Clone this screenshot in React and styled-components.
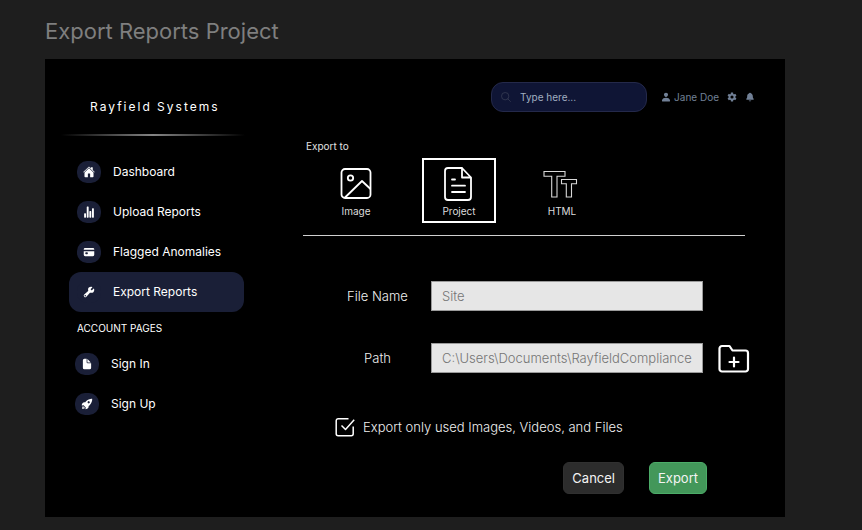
import React, { useState } from "react";
import styled, { createGlobalStyle } from "styled-components";
import {
  IoHome,
  IoStatsChart,
  IoCard,
  IoBuild,
  IoDocument,
  IoRocketSharp,
  IoPerson,
  IoSettingsSharp,
  IoNotifications,
  IoSearchOutline,
} from "react-icons/io5";

const GlobalStyle = createGlobalStyle`
  *, *::before, *::after { box-sizing: border-box; }
  body {
    margin: 0;
    background: #1e1e1e;
    color: #fff;
    font-family: Inter, "Open Sans", sans-serif;
    font-size: 12px;
    line-height: 16px;
  }
  button, input { font: inherit; color: inherit; }
`;

const Page = styled.main`
  padding: 17px 77px 13px 45px;
`;

const PageTitle = styled.h1`
  margin: 0 0 14px;
  color: #7f7f7f;
  font-size: 22px;
  font-weight: 400;
  line-height: 28px;
`;

const Panel = styled.div`
  display: flex;
  background: #000;
`;

const Sidebar = styled.aside`
  flex: 0 0 200px;
  padding: 40px 0 92px;
`;

const Brand = styled.div`
  padding-left: 45px;
  letter-spacing: 2px;
  font-size: 12px;
`;

const BrandRule = styled.div`
  height: 2px;
  margin: 19px 0 16px 16px;
  background: linear-gradient(90deg, transparent, #858585 50%, transparent);
`;

const NavList = styled.ul`
  list-style: none;
  margin: 0 0 0 24px;
  padding: 0;
`;

const NavLink = styled.a`
  display: flex;
  align-items: center;
  gap: 12px;
  height: 40px;
  width: 175px;
  padding-left: ${(p) => (p.$compact ? 6 : 8)}px;
  border-radius: 12px;
  background: ${(p) => (p.$active ? "#1a1f37" : "transparent")};
  color: #fff;
  text-decoration: none;
`;

const NavIcon = styled.span`
  display: grid;
  place-items: center;
  width: 24px;
  height: 22px;
  border-radius: 10px;
  background: #1a1f37;
  font-size: 12px;
`;

const SectionLabel = styled.h2`
  margin: 8px 0 8px 32px;
  font-size: 10px;
  font-weight: 400;
  line-height: 16px;
`;

const Content = styled.section`
  flex: 1;
  min-width: 0;
  padding: 23px 30px 23px 58px;
`;

const TopBar = styled.header`
  display: flex;
  justify-content: flex-end;
  align-items: center;
  gap: 14px;
  font-size: 10px;
`;

const SearchBox = styled.label`
  display: flex;
  align-items: center;
  gap: 8px;
  width: 156px;
  height: 30px;
  padding: 0 8px;
  border: 1px solid #24294a;
  border-radius: 12px;
  background: #0f1535;
  color: #3a3f55;
  font-size: 12px;
`;

const SearchInput = styled.input`
  flex: 1;
  min-width: 0;
  padding: 0;
  border: 0;
  outline: 0;
  background: transparent;
  font-size: 10px;
  color: #a0aec0;
  &::placeholder { color: #a0aec0; opacity: 1; }
`;

const UserTools = styled.div`
  display: flex;
  align-items: center;
  gap: 8px;
  color: #718096;
`;

const UserLink = styled.a`
  display: flex;
  align-items: center;
  gap: 3px;
  color: #718096;
  text-decoration: none;
`;

const IconButton = styled.button`
  display: flex;
  padding: 0;
  border: 0;
  background: none;
  cursor: pointer;
`;

const ExportTo = styled.h2`
  margin: 26px 0 4px 3px;
  font-size: 10px;
  font-weight: 400;
  line-height: 16px;
  color: #e0e0e0;
`;

const FormatBar = styled.div`
  display: flex;
  gap: 29px;
  margin-right: 10px;
  padding: 0 16px 12px;
  border-bottom: 1px solid #d0d0d0;
`;

const FormatButton = styled.button`
  display: flex;
  flex-direction: column;
  align-items: center;
  justify-content: flex-end;
  gap: 3px;
  width: 74px;
  height: 65px;
  padding: 0 0 3px;
  border: 2px solid ${(p) => (p.$selected ? "#fff" : "transparent")};
  background: none;
  color: #dcdcdc;
  font-size: 10px;
  line-height: 14px;
  cursor: pointer;
`;

const Form = styled.form`
  padding: 45px 0 0 21px;
`;

const Field = styled.div`
  display: flex;
  align-items: center;
  margin-bottom: ${(p) => (p.$last ? 44 : 32)}px;
`;

const FieldLabel = styled.label`
  flex: 0 0 107px;
  text-align: center;
  color: #f0f0f0;
  font-size: 13px;
  font-weight: 300;
`;

const TextInput = styled.input`
  flex: 1;
  min-width: 0;
  max-width: 272px;
  height: 30px;
  padding: 0 10px;
  border: 1px solid #9a9a9a;
  border-radius: 0;
  background: #e6e6e6;
  color: #757575;
  font-size: 13px;
  font-weight: 300;
`;

const FolderButton = styled(IconButton)`
  margin-left: 15px;
  color: #fff;
`;

const CheckRow = styled.label`
  display: flex;
  align-items: center;
  gap: 8px;
  margin-left: 11px;
  color: #f0f0f0;
  font-size: 13px;
  font-weight: 300;
  cursor: pointer;
`;

const CheckControl = styled.span`
  display: grid;

  & > * { grid-area: 1 / 1; margin: 0; width: 20px; height: 20px; }
  & > input { opacity: 0; }
  & > input:not(:checked) + svg .tick { display: none; }
  & > input:focus-visible + svg { outline: 1px solid #718096; }
`;

const Actions = styled.div`
  display: flex;
  justify-content: flex-end;
  gap: 25px;
  margin: 25px 48px 0 0;
`;

const ActionButton = styled.button`
  height: 32px;
  padding: 0 8px;
  border: 1px solid ${(p) => (p.$primary ? "#4cac68" : "#303030")};
  border-radius: 6px;
  background: ${(p) => (p.$primary ? "#43975a" : "#2c2c2c")};
  color: #f3f3f3;
  font-size: 13px;
  cursor: pointer;
`;

const ImageIcon = () => (
  <svg width="34" height="34" viewBox="0 0 34 34" fill="none" stroke="#fff" strokeWidth="1.8" strokeLinejoin="round">
    <rect x="2.5" y="2" width="29" height="29" rx="3.5" />
    <circle cx="11.5" cy="11" r="2.7" />
    <path d="M6 30.5 23 14l8.500 8" />
  </svg>
);

const ProjectIcon = () => (
  <svg width="34" height="34" viewBox="0 0 34 34" fill="none" stroke="#fff" strokeWidth="1.8" strokeLinejoin="round" strokeLinecap="round">
    <path d="M20 1H6a3 3 0 0 0-3 3v26a3 3 0 0 0 3 3h20a3 3 0 0 0 3-3V10.500L20 1v9.500h9" />
    <path d="M10 12.500h3M10 18.700h13M10 25h13" />
  </svg>
);

const TypeIcon = () => (
  <svg width="34" height="34" viewBox="0 0 34 34" fill="none" stroke="#d8d8d8" strokeWidth="1.1" overflow="visible">
    <path d="M-1 4.500h21v4.800h-8V30H6.700V9.300H-1z" />
    <path d="M16.500 12.500h15v4.300h-5V30h-5.200V16.800h-4.800z" />
  </svg>
);

const FolderPlusIcon = () => (
  <svg width="32" height="30" viewBox="0 0 32 30" fill="none" stroke="#fff" strokeWidth="2.2" strokeLinejoin="round" strokeLinecap="round">
    <path d="M4 3h7.500l3 4.500h13a2.500 2.500 0 0 1 2.500 2.500v16a2.500 2.500 0 0 1-2.500 2.500H4A2.500 2.500 0 0 1 1.500 26V5.500A2.500 2.500 0 0 1 4 3z" />
    <path d="M16 14.500v9M11.500 19h9" />
  </svg>
);

const CheckIcon = () => (
  <svg viewBox="0 0 20 20" fill="none" stroke="#fff" strokeWidth="1.5" strokeLinejoin="round">
    <path d="M13.500 1.700H3.200A2 2 0 0 0 1.200 3.700v13a2 2 0 0 0 2 2h13a2 2 0 0 0 2-2V9.500" />
    <path className="tick" d="m6.500 8.500 4 4L19.200 2.800" />
  </svg>
);

const mainLinks = [
  { label: "Dashboard", Icon: IoHome },
  { label: "Upload Reports", Icon: IoStatsChart },
  { label: "Flagged Anomalies", Icon: IoCard },
  { label: "Export Reports", Icon: IoBuild, active: true },
];

const accountLinks = [
  { label: "Sign In", Icon: IoDocument },
  { label: "Sign Up", Icon: IoRocketSharp },
];

const formats = [
  { label: "Image", Icon: ImageIcon },
  { label: "Project", Icon: ProjectIcon },
  { label: "HTML", Icon: TypeIcon },
];

function Navigation({ links, compact }) {
  return (
    <NavList>
      {links.map(({ label, Icon, active }) => (
        <li key={label}>
          <NavLink href="#" $active={active} $compact={compact} aria-current={active ? "page" : undefined}>
            <NavIcon><Icon /></NavIcon>
            {label}
          </NavLink>
        </li>
      ))}
    </NavList>
  );
}

export default function App() {
  const [format, setFormat] = useState("Project");

  return (
    <Page>
      <GlobalStyle />
      <PageTitle>Export Reports Project</PageTitle>
      <Panel>
        <Sidebar>
          <Brand>Rayfield Systems</Brand>
          <BrandRule />
          <nav>
            <Navigation links={mainLinks} />
            <SectionLabel>ACCOUNT PAGES</SectionLabel>
            <Navigation links={accountLinks} compact />
          </nav>
        </Sidebar>
        <Content>
          <TopBar>
            <SearchBox>
              <IoSearchOutline />
              <SearchInput type="search" placeholder="Type here..." aria-label="Search" />
            </SearchBox>
            <UserTools>
              <UserLink href="#"><IoPerson />Jane Doe</UserLink>
              <IconButton type="button" aria-label="Settings"><IoSettingsSharp /></IconButton>
              <IconButton type="button" aria-label="Notifications"><IoNotifications /></IconButton>
            </UserTools>
          </TopBar>
          <ExportTo>Export to</ExportTo>
          <FormatBar>
            {formats.map(({ label, Icon }) => (
              <FormatButton
                key={label}
                type="button"
                $selected={format === label}
                aria-pressed={format === label}
                onClick={() => setFormat(label)}
              >
                <Icon />
                {label}
              </FormatButton>
            ))}
          </FormatBar>
          <Form onSubmit={(e) => e.preventDefault()}>
            <Field>
              <FieldLabel htmlFor="file-name">File Name</FieldLabel>
              <TextInput id="file-name" defaultValue="Site" />
            </Field>
            <Field $last>
              <FieldLabel htmlFor="path">Path</FieldLabel>
              <TextInput id="path" defaultValue="C:\Users\Documents\RayfieldCompliance" />
              <FolderButton type="button" aria-label="Choose folder"><FolderPlusIcon /></FolderButton>
            </Field>
            <CheckRow>
              <CheckControl>
                <input type="checkbox" defaultChecked />
                <CheckIcon />
              </CheckControl>
              Export only used Images, Videos, and Files
            </CheckRow>
            <Actions>
              <ActionButton type="button">Cancel</ActionButton>
              <ActionButton type="submit" $primary>Export</ActionButton>
            </Actions>
          </Form>
        </Content>
      </Panel>
    </Page>
  );
}
